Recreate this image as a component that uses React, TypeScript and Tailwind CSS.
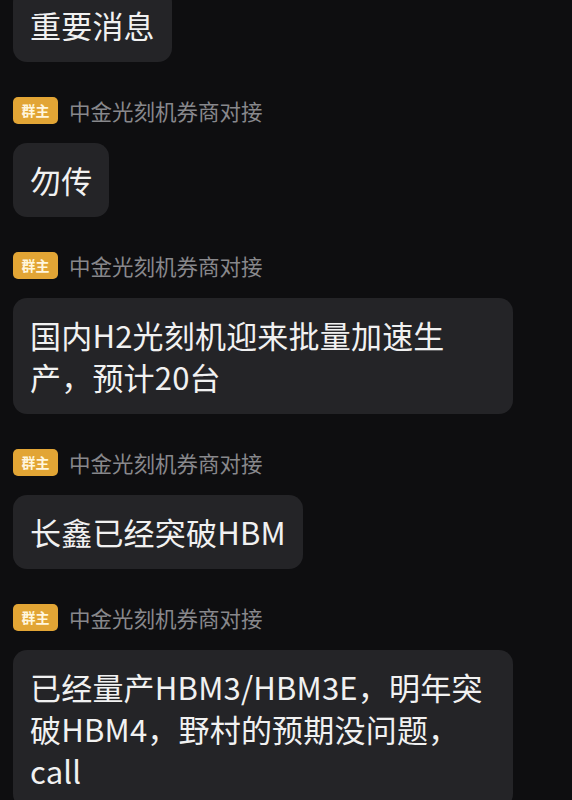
import React from 'react';

interface Msg {
  text: string;
  showName: boolean;
}

const messages: Msg[] = [
  { text: '重要消息', showName: false },
  { text: '勿传', showName: true },
  { text: '国内H2光刻机迎来批量加速生产，预计20台', showName: true },
  { text: '长鑫已经突破HBM', showName: true },
  { text: '已经量产HBM3/HBM3E，明年突破HBM4，野村的预期没问题，call', showName: true },
];

const NameRow: React.FC = () => (
  <div className="flex items-center mt-[35px] mb-[19px]">
    <span className="flex h-[27px] w-[45px] items-center justify-center rounded-[5px] bg-[#e2a535] text-[14px] font-bold text-[#fff6de]">
      群主
    </span>
    <span className="ml-[11px] text-[21.5px] leading-[27px] text-[#88888c]">中金光刻机券商对接</span>
  </div>
);

const App: React.FC = () => {
  return (
    <div className="h-[800px] overflow-hidden bg-[#0e0e10] px-[13px] font-['Noto_Sans_CJK_SC','Noto_Sans',sans-serif]">
      <div className="-mt-[12px] flex flex-col items-start">
        {messages.map((m, i) => (
          <React.Fragment key={i}>
            {m.showName && <NameRow />}
            <div className="max-w-[500px] rounded-[14px] bg-[#242427] px-[17px] py-[16px] text-[31px] leading-[42px] tracking-[0.2px] text-[#f1f1f1]">
              {m.text}
            </div>
          </React.Fragment>
        ))}
      </div>
    </div>
  );
};

export default App;
